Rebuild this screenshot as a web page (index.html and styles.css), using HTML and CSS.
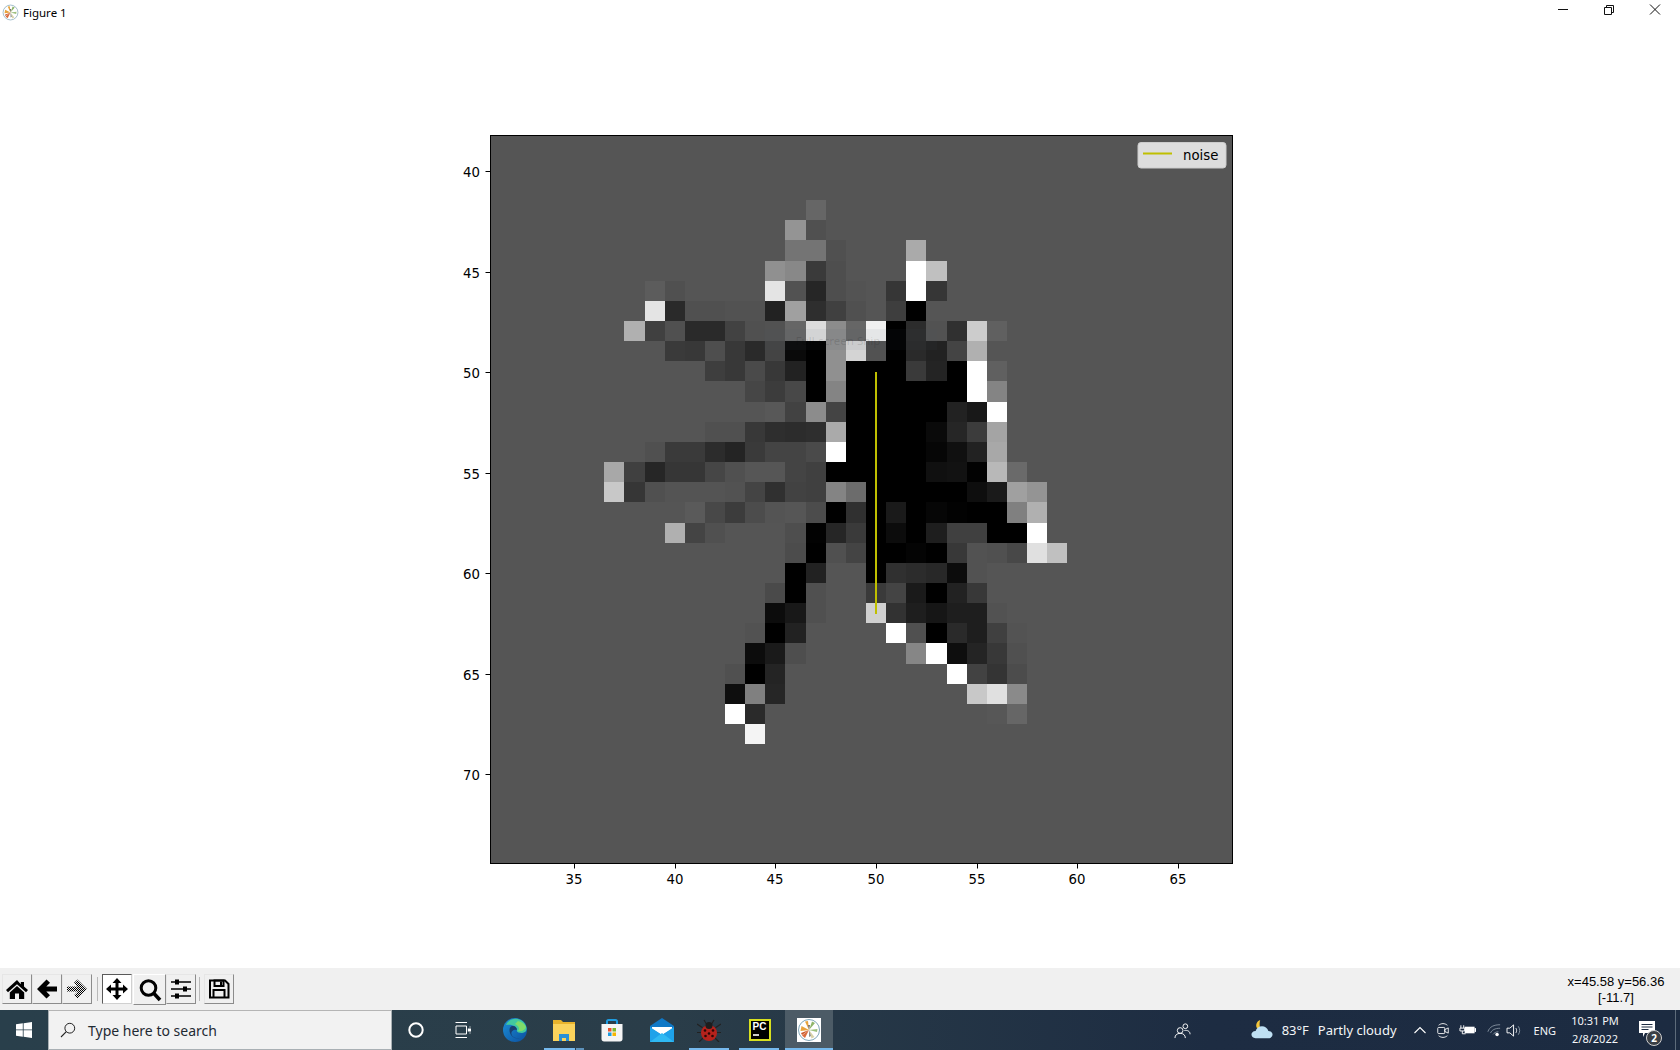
FILE: index.html
```html
<!DOCTYPE html>
<html lang="en">
<head>
<meta charset="utf-8">
<title>Figure 1</title>
<link rel="stylesheet" href="styles.css">
</head>
<body>
<svg width="0" height="0" class="defs">
  <defs>
    <pattern id="dither" width="2" height="2" patternUnits="userSpaceOnUse">
      <rect width="1" height="1" fill="#000"/><rect x="1" y="1" width="1" height="1" fill="#000"/>
    </pattern>
    <g id="mpl-logo">
      <circle cx="12" cy="12" r="10.5" fill="#fff" stroke="#7fa6b8" stroke-width="1"/>
      <path d="M12 12 L4.5 8 L3.5 13Z" fill="#e8a33d"/>
      <path d="M12 12 L8 3.5 L11 3Z" fill="#e8a33d"/>
      <path d="M12 12 L18 5 L15 3.5Z" fill="#8fb56a"/>
      <path d="M12 12 L20.5 11 L20 14Z" fill="#9cbf7c"/>
      <path d="M12 12 L17.5 19 L14.5 20.5Z" fill="#d9d2a8"/>
      <path d="M12 12 L8 20 L5 17.5Z" fill="#d96b3c"/>
      <path d="M12 12 L4 15 L5 17Z" fill="#c9582c"/>
      <path d="M12 12 L13 7 L11 7Z" fill="#6f6f6f"/>
      <path d="M12 12 L12 19 L14 18Z" fill="#8a8f8f"/>
    </g>
  </defs>
</svg>

<header class="titlebar">
  <svg class="title-icon" viewBox="0 0 24 24"><use href="#mpl-logo"/></svg>
  <span class="title-text">Figure 1</span>
  <div class="winctl">
    <svg class="winbtn" viewBox="0 2 46 24"><path d="M18 11.5H28" stroke="#111" fill="none"/></svg>
    <svg class="winbtn" viewBox="0 2 46 24"><path d="M18.5 9.5h7v7h-7zM20.5 9.5v-2h7v7h-2" stroke="#111" fill="none"/></svg>
    <svg class="winbtn" viewBox="0 2 46 24"><path d="M18 6.5L28 16.5M28 6.5L18 16.5" stroke="#111" fill="none"/></svg>
  </div>
</header>

<main class="figure">
  <svg id="plot" class="plot" viewBox="0 24 1680 944" width="1680" height="944">
    <rect class="axes-bg" x="490.5" y="135.5" width="742" height="728"/>
    <g id="cells" shape-rendering="crispEdges"></g>
    <line class="data-line" x1="876" y1="372" x2="876" y2="614"/>
    <rect class="axes-frame" x="490.5" y="135.5" width="742" height="728"/>
    <g id="ticks"></g>
    <rect class="legend-box" x="1138" y="142.5" width="88" height="25.5" rx="3"/>
    <line class="data-line" x1="1143" y1="153.5" x2="1172" y2="153.5"/>
    <text class="tick-label" x="1183" y="159.5">noise</text>
    <rect class="snip-box" x="764" y="329" width="173" height="21"/>
    <text class="snip-text" x="838" y="345" text-anchor="middle">Full-screen Snip</text>
  </svg>
</main>

<section class="toolbar">
  <button class="tb-btn"><svg viewBox="0 0 24 24"><path d="M12 3L1 13l2 2.200L12 7.300l9 7.900 2-2.200-4-3.600V5h-3.200v2.200z"/><path d="M4.800 15.400L12 9l7.200 6.400V22H14v-5.500h-4V22H4.800z"/></svg></button>
  <button class="tb-btn"><svg viewBox="0 0 24 24"><path d="M2 12L11.500 2.500l3.500 3.300-3.700 3.600H22v5.200H11.300l3.700 3.600-3.500 3.300z"/></svg></button>
  <button class="tb-btn"><svg viewBox="0 0 24 24"><path fill="url(#dither)" d="M22 12L12.500 2.500 9 5.800l3.700 3.600H2v5.200h10.700L9 18.200l3.500 3.300z"/></svg></button>
  <span class="tb-sep"></span>
  <button class="tb-btn tb-pressed"><svg viewBox="0 0 24 24"><path d="M12 1l4.500 5h-3v4.500H18v-3l5 4.500-5 4.500v-3h-4.500V18h3L12 23l-4.500-5h3v-4.500H6v3L1 12l5-4.500v3h4.500V6h-3z"/></svg></button>
  <button class="tb-btn tb-hover"><svg viewBox="0 0 24 24"><circle cx="10.500" cy="10" r="7.300" fill="none" stroke="#000" stroke-width="3"/><path d="M15.500 15l6.500 7" stroke="#000" stroke-width="3.600" fill="none"/></svg></button>
  <button class="tb-btn"><svg viewBox="0 0 24 24"><path d="M2 5h20M2 12h20M2 19h20" stroke="#000" stroke-width="1.500" fill="none"/><rect x="6" y="2.500" width="4" height="5"/><rect x="14" y="9.500" width="4" height="5"/><rect x="6" y="16.500" width="4" height="5"/></svg></button>
  <span class="tb-sep tb-sep-b"></span>
  <button class="tb-btn"><svg viewBox="0 0 24 24"><path d="M3 3.500h15l3.500 3.500v13.500H3z" fill="none" stroke="#000" stroke-width="2"/><path d="M7.500 3.500h9v5.500h-9z" fill="none" stroke="#000" stroke-width="2"/><path d="M13 4.500h2v3.500h-2z"/><path d="M6.500 20.500v-7.500h11v7.500" fill="none" stroke="#000" stroke-width="2"/></svg></button>
  <div class="coords">x=45.58 y=56.36<br>[-11.7]</div>
</section>

<footer class="taskbar">
  <div class="start"><svg class="ico16" viewBox="0 0 16 16"><path fill="#fff" d="M0 2.300L6.800 1.300V7.500H0zM7.600 1.200L16 0V7.500H7.600zM0 8.300H6.800V14.700L0 13.700zM7.600 8.300H16V16L7.600 14.800z"/></svg></div>
  <div class="search">
    <svg class="search-ico" viewBox="0 0 16 16"><circle cx="9.800" cy="6.200" r="4.900" fill="none" stroke="#222" stroke-width="1"/><path d="M6.300 9.700L1 15" stroke="#222" stroke-width="1.100" fill="none"/></svg>
    <span class="search-text">Type here to search</span>
  </div>
  <div class="tasks">
    <div class="task task-a"><svg class="ico18" viewBox="0 0 18 18"><circle cx="9" cy="9" r="6.700" fill="none" stroke="#fff" stroke-width="2"/></svg></div>
    <div class="task task-b"><svg class="ico18" viewBox="0 0 18 18"><path d="M1.500 1.500H13M1.500 16.500H13M2 5H12.500V13H2zM16 5.500V6.500M16 11.500V12.500" stroke="#fff" stroke-width="1" fill="none"/><rect x="13.800" y="7.500" width="3.200" height="3" fill="#fff"/></svg></div>
    <div class="task task-c"><svg class="ico24" viewBox="0 0 24 24">
      <defs><linearGradient id="edgeg" x1="0" y1="0" x2="1" y2="1"><stop offset="0" stop-color="#1c8fd8"/><stop offset="1" stop-color="#0c4f9e"/></linearGradient></defs>
      <circle cx="12" cy="12" r="12" fill="url(#edgeg)"/>
      <path d="M3 7C6-1 19-2 23 8c1.500 4 0 7-4 7-3 0-6-1-5-3 0-3-4-6-11-5z" fill="#42c9a0"/>
      <path d="M14 12c0-3-3-5-6-3.500C6 10 6 14 8 17c2 3 6 4 10 3-5 1-9-1-9.500-4-.5-3 2.500-5 5.500-4z" fill="#1a3f70"/>
      <path d="M15 3c4 1 7 3 8 6-1 3-4 5-8 4 2-2 1-5-3-7z" fill="#7fdc6a"/>
    </svg></div>
    <div class="task task-d run run-split"><svg class="ico24" viewBox="0 0 24 24">
      <path d="M1 2h8l2 2h12v19H1z" fill="#e9b32c"/>
      <path d="M1 6h22v17H1z" fill="#fbd35c"/>
      <path d="M7 23v-7h10v7h-3v-3h-4v3z" fill="#2b8fd6"/>
    </svg></div>
    <div class="task task-e"><svg class="ico24" viewBox="0 0 24 24">
      <path d="M7 7V3.500c0-1 .5-1.500 1.500-1.500h7c1 0 1.500.5 1.500 1.500V7" fill="none" stroke="#1f9ce0" stroke-width="2"/>
      <path d="M1.500 6h21v15c0 1.500-1 2.500-2.500 2.500H4c-1.500 0-2.500-1-2.500-2.500z" fill="#f5f5f5"/>
      <rect x="8" y="10" width="3.500" height="3.500" fill="#e9502c"/><rect x="12.500" y="10" width="3.500" height="3.500" fill="#7cb82c"/>
      <rect x="8" y="14.500" width="3.500" height="3.500" fill="#1f9ce0"/><rect x="12.500" y="14.500" width="3.500" height="3.500" fill="#f7b600"/>
    </svg></div>
    <div class="task task-f"><svg class="ico24" viewBox="0 0 24 24">
      <path d="M0 8L12 0l12 8v16H0z" fill="#0f78c6"/>
      <path d="M2 9h20v2L12 17 2 11z" fill="#fff"/>
      <path d="M0 9l12 8 12-8v15H0z" fill="#1ea2ea"/>
      <path d="M0 24l12-9 12 9z" fill="#2fb9f3"/>
    </svg></div>
    <div class="task task-g run"><svg class="ico24" viewBox="0 0 24 24">
      <path d="M7 2l3 5M17 2l-3 5M6 10L0 6M18 10l6-4M4 14.500H-1M20 14.500h5M6 20l-4 4M18 20l4 4" stroke="#222" stroke-width="1.200" fill="none"/>
      <ellipse cx="12" cy="15" rx="8" ry="8" fill="#b5221c"/>
      <circle cx="12" cy="7.500" r="3.500" fill="#1d1d1d"/>
      <circle cx="8" cy="12.500" r="1.300" fill="#2a0805"/><circle cx="16" cy="12.500" r="1.300" fill="#2a0805"/><circle cx="8.500" cy="18" r="1.300" fill="#2a0805"/><circle cx="15.500" cy="18" r="1.300" fill="#2a0805"/><circle cx="12" cy="15.500" r="1.300" fill="#2a0805"/>
    </svg></div>
    <div class="task task-h run"><div class="pc-icon"><span class="pc-text">PC</span><span class="pc-dash"></span></div></div>
    <div class="task task-i run active"><div class="fig-icon"><svg class="ico24" viewBox="0 0 24 24"><use href="#mpl-logo"/></svg></div></div>
  </div>
  <div class="tray">
    <svg class="tray-people" viewBox="0 0 18 18"><circle cx="6.500" cy="9" r="3" fill="none" stroke="#fff"/><path d="M1 17c0-3 2-5 5.500-5s5.500 2 5.500 5" fill="none" stroke="#fff"/><circle cx="12" cy="4.500" r="2.500" fill="none" stroke="#fff"/><path d="M11 9c3-.5 6 .5 6 4" fill="none" stroke="#fff"/></svg>
    <svg class="tray-weather" viewBox="0 0 24 24"><path d="M10 1c-3 1-5 4-4 8 1 2 3 3 6 3-3-2-3-7-2-11z" fill="#f3c53a"/><path d="M5 21c-3 0-4.500-2-4.500-4S2 13 5 13c1-3 4-5 7-5s6 2 7 5c3 0 4.500 2 4.500 4s-1.500 4-4.500 4z" fill="#bfe0f3"/></svg>
    <span class="tray-temp">83°F</span>
    <span class="tray-cond">Partly cloudy</span>
    <svg class="tray-chev" viewBox="0 0 14 14"><path d="M1.500 10L7 4.500 12.500 10" stroke="#fff" fill="none" stroke-width="1.100"/></svg>
    <svg class="tray-meet" viewBox="0 0 16 18"><path d="M3 3C6 .5 10 .5 13 3M3 15c3 2.500 7 2.500 10 0" stroke="#fff" fill="none"/><rect x="2" y="5.500" width="8" height="7" rx="1" fill="none" stroke="#fff"/><path d="M10 8l4-2v6l-4-2z" fill="none" stroke="#fff"/></svg>
    <svg class="tray-batt" viewBox="0 0 18 12"><path d="M2 1v3M5 1v3M1 4h5v3H1zM3.500 7v3H7" stroke="#fff" fill="none"/><rect x="6" y="2.500" width="10.500" height="7" fill="#fff"/><rect x="16.500" y="4" width="1.500" height="4" fill="#fff"/></svg>
    <svg class="tray-wifi" viewBox="0 0 16 16"><path d="M1 10C3 4 8 2 15 2" stroke="#8a97a5" fill="none"/><path d="M4 11.500C5.500 8 9 6 15 6" stroke="#8a97a5" fill="none"/><path d="M7 13C8 11.500 10 10 13 10" stroke="#8a97a5" fill="none"/><circle cx="11.500" cy="13" r="2" fill="#fff"/></svg>
    <svg class="tray-vol" viewBox="0 0 18 16"><path d="M1 5.500h3L8 2v12L4 10.500H1z" fill="none" stroke="#fff"/><path d="M10.500 5.500c1 1.500 1 3.500 0 5" stroke="#fff" fill="none"/><path d="M13 3.500c2 2.500 2 6.500 0 9" stroke="#8a97a5" fill="none"/></svg>
    <span class="tray-lang">ENG</span>
    <div class="tray-clock"><span>10:31 PM</span><span>2/8/2022</span></div>
    <div class="tray-note">
      <svg class="note-ico" viewBox="0 0 16 16"><path d="M0 0h16v12H6l-2 4v-4H0z" fill="#fff"/><path d="M2.500 3.500h11M2.500 6h11M2.500 8.500h7" stroke="#1d2c42" fill="none"/></svg>
      <span class="note-badge">2</span>
    </div>
    <span class="show-desktop"></span>
  </div>
</footer>
<script src="app.js"></script>
</body>
</html>
```
FILE: styles.css
```css
* { box-sizing: border-box; }
html, body { margin: 0; padding: 0; }
body {
  width: 1680px;
  height: 1050px;
  overflow: hidden;
  display: flex;
  flex-direction: column;
  background: #fff;
  font-family: "Noto Sans", "Open Sans", sans-serif;
}
.defs { position: absolute; }

/* title bar */
.titlebar { height: 24px; display: flex; align-items: center; flex: none; background: #fff; }
.title-icon { width: 17px; height: 17px; margin-left: 2px; }
.title-text { margin-left: 4px; font-size: 11.5px; color: #000; }
.winctl { margin-left: auto; margin-right: 2px; display: flex; }
.winbtn { width: 46px; height: 24px; display: block; }

/* figure */
.figure { height: 944px; flex: none; }
.plot { display: block; }
.axes-bg { fill: #555; }
.axes-frame { fill: none; stroke: #000; stroke-width: 1; }
.data-line { stroke: #bfbf00; stroke-width: 2; fill: none; }
.tick-mark { stroke: #000; stroke-width: 1; }
.tick-label { font-family: "DejaVu Sans", sans-serif; font-size: 13.3px; fill: #000; }
.legend-box { fill: #dddddd; stroke: #cccccc; stroke-width: 1; }
.snip-box { fill: rgba(60, 90, 100, 0.06); }
.snip-text { font-family: "Noto Sans", sans-serif; font-size: 11.5px; fill: rgba(0, 0, 0, 0.12); }

/* matplotlib toolbar */
.toolbar {
  height: 42px;
  flex: none;
  background: #f0f0f0;
  display: flex;
  align-items: flex-start;
  padding: 6px 0 0 2px;
}
.tb-btn {
  width: 30px;
  height: 30px;
  padding: 0;
  background: #f0f0f0;
  border: 1px solid;
  border-color: #e6e6e6 #8c8c8c #8c8c8c #e6e6e6;
  display: flex;
  align-items: center;
  justify-content: center;
}
.tb-btn svg { width: 24px; height: 24px; display: block; }
.tb-pressed { background: #fff; border-color: #5a5a5a #d0d0d0 #d0d0d0 #5a5a5a; }
.tb-hover { width: 33px; height: 31px; margin-left: 1px; border-color: #fff #8c8c8c #8c8c8c #fff; }
.tb-sep { width: 1px; height: 24px; margin: 3px 4px 0 5px; background: #b9b9b9; }
.tb-sep-b { margin: 3px 4px 0 3px; }
.coords {
  margin-left: auto;
  width: 128px;
  text-align: center;
  font-family: "Liberation Sans", Arial, sans-serif;
  font-size: 13px;
  line-height: 16px;
  color: #000;
}

/* taskbar */
.taskbar {
  height: 40px;
  flex: none;
  display: flex;
  align-items: stretch;
  background: linear-gradient(90deg, #293f4b 0%, #2a3d49 40%, #1d2c42 72%, #1c2b41 100%);
  color: #fff;
}
.start { width: 48px; flex: none; display: flex; align-items: center; justify-content: center; }
.ico16 { width: 16px; height: 16px; display: block; }
.ico18 { width: 18px; height: 18px; display: block; }
.ico24 { width: 24px; height: 24px; display: block; }
.search {
  width: 344px;
  flex: none;
  background: #f2f2f2;
  border: 1px solid #a9b0b4;
  border-top-color: #b5b5b5;
  display: flex;
  align-items: center;
  padding-left: 11px;
}
.search-ico { width: 16px; height: 16px; }
.search-text { margin-left: 12px; font-size: 14px; color: #1f2a33; }
.tasks { display: flex; align-items: stretch; }
.task { width: 48px; flex: none; display: flex; align-items: center; justify-content: center; position: relative; }
.task-b { margin-left: -1px; }
.task-c { margin-left: 4px; }
.task-d { margin-left: 1px; }
.task-f { margin-left: 2px; }
.task-g { margin-left: -1px; }
.task-h { margin-left: 2px; }
.task-i { margin-left: 2px; }
.run::after {
  content: "";
  position: absolute;
  left: 4px;
  right: 4px;
  bottom: 0;
  height: 2px;
  background: #76b9ed;
}
.run-split::after { left: 4px; right: 13px; }
.run-split::before {
  content: "";
  position: absolute;
  right: 4px;
  width: 8px;
  bottom: 0;
  height: 2px;
  background: #5d92bb;
}
.active { background: #4c5b66; }
.active::after { left: 0; right: 0; }
.pc-icon {
  width: 22px;
  height: 22px;
  margin-left: 1px;
  background: #000;
  border: 2px solid #d8e020;
  display: flex;
  flex-direction: column;
  padding: 1px 2px;
}
.pc-text { font-family: "Liberation Sans", sans-serif; font-weight: 700; font-size: 10px; line-height: 10px; color: #fff; }
.pc-dash { width: 6px; height: 2px; background: #ccc; margin-top: 2px; }
.fig-icon { width: 24px; height: 24px; background: #fff; }

.tray { margin-left: auto; display: flex; align-items: center; height: 40px; }
.tray-people { width: 17px; height: 17px; margin-right: 59px; }
.tray-weather { width: 24px; height: 22px; margin-right: 8px; }
.tray-temp { font-size: 13px; margin-right: 9px; color: #f4f6f8; }
.tray-cond { font-size: 13px; margin-right: 16px; color: #f4f6f8; }
.tray-chev { width: 14px; height: 14px; margin-right: 9px; }
.tray-meet { width: 14px; height: 17px; margin-right: 9px; }
.tray-batt { width: 17px; height: 12px; margin-right: 11px; }
.tray-wifi { width: 14px; height: 14px; margin-right: 5px; }
.tray-vol { width: 17px; height: 15px; margin-right: 11px; }
.tray-lang { font-size: 11px; margin-right: 15px; color: #f4f6f8; }
.tray-clock {
  display: flex;
  flex-direction: column;
  align-items: center;
  font-size: 11px;
  line-height: 18px;
  width: 48px;
  white-space: nowrap;
  color: #f4f6f8;
  margin-right: 20px;
}
.tray-note { width: 36px; height: 40px; position: relative; display: flex; align-items: center; }
.note-ico { width: 16px; height: 16px; margin-top: -3px; }
.note-badge {
  position: absolute;
  left: 7px;
  top: 20px;
  width: 16px;
  height: 16px;
  border-radius: 50%;
  background: #3a3f45;
  border: 1px solid #d0d0d0;
  color: #fff;
  font-size: 10px;
  font-weight: 700;
  line-height: 14px;
  text-align: center;
}
.show-desktop { width: 5px; height: 40px; border-left: 1px solid #5d6b7a; }
```
FILE: app.js
```js
// Image data: row -> list of [first column, hex grey values].
var ROWS = {
  42: [[47, "66"]],
  43: [[46, "94 50"]],
  44: [[46, "74 74 50"], [52, "aa"]],
  45: [[45, "90 88 3a 4e"], [52, "ff c0"]],
  46: [[39, "5c 50"], [45, "e4 52 26 4e 53"], [51, "36 ff 36"]],
  47: [[39, "e4 2a 50 50 52 52 22 a0 2e 40 50 55 3e 00"]],
  48: [[38, "b0 40 50 2a 2a 42 50 52 66 dc 8c 66 f0 00 2c 52 30 cc 60"]],
  49: [[40, "3a 38 4e 38 2a 44 0a 00 90 d4 52 00 2a 22 44 b0 55"]],
  50: [[42, "3e 38 4a 38 22 00 90 00 00 00 3a 24 00 ff 60"]],
  51: [[44, "46 3c 48 00 84 00 00 00 00 00 00 ff 84"]],
  52: [[45, "58 42 8c 44 00 00 00 00 00 22 18 ff"]],
  53: [[42, "50 50 38 2e 2c 2e aa 00 00 00 00 0a 26 3c a4"]],
  54: [[39, "50 3a 3a 2c 24 3a 44 44 4a ff 00 00 00 00 06 10 22 a8"]],
  55: [[37, "a8 40 26 36 36 46 50 56 56 44 40 00 00 00 00 00 10 12 02 b8 6a"]],
  56: [[37, "c8 36 50 54 54 54 52 44 30 42 40 84 6c 00 00 00 00 00 0e 1a a0 94"]],
  57: [[41, "5a 48 3c 4c 54 56 4c 00 30 00 1a 00 06 02 00 00 80 b0"]],
  58: [[40, "b0 44 50 55 55 55 4e 02 26 3a 00 0c 00 1e 40 40 00 00 ff"]],
  59: [[46, "4c 00 50 44 00 00 04 00 38 52 50 48 e0 c0"]],
  60: [[46, "00 22 55 55 00 30 2c 28 0c 52"]],
  61: [[45, "4a 00 50 55 55 3a 44 1a 00 22 38"]],
  62: [[45, "0c 18 50 55 55 d0 32 1e 16 1e 1e 52"]],
  63: [[44, "52 00 22 55 55 55 55 ff 50 00 2a 1e 40 53"]],
  64: [[44, "0c 1a 4e"], [52, "86 ff 0e 24 38 50"]],
  65: [[43, "50 00 24"], [54, "ff 42 34 4c"]],
  66: [[43, "0e 80 26"], [55, "c8 e0 8a"]],
  67: [[43, "ff 2a"], [56, "57 66"]],
  68: [[44, "f4"]]
};

var NS = "http://www.w3.org/2000/svg";
var cellLayer = document.getElementById("cells");
var tickLayer = document.getElementById("ticks");

function el(name, attrs, parent, text) {
  var node = document.createElementNS(NS, name);
  for (var k in attrs) node.setAttribute(k, attrs[k]);
  if (text) node.textContent = text;
  parent.appendChild(node);
  return node;
}
function colX(c) { return Math.round(866 + (c - 50) * 20.13); }
function rowY(r) { return Math.round(321 + (r - 48) * 20.15); }

Object.keys(ROWS).forEach(function (key) {
  var r = +key;
  ROWS[key].forEach(function (run) {
    run[1].split(" ").forEach(function (hex, i) {
      var c = run[0] + i;
      el("rect", {
        x: colX(c), y: rowY(r),
        width: colX(c + 1) - colX(c), height: rowY(r + 1) - rowY(r),
        fill: "#" + hex + hex + hex
      }, cellLayer);
    });
  });
});

for (var xv = 35; xv <= 65; xv += 5) {
  var x = Math.round(876 + (xv - 50) * 20.13) + 0.5;
  el("line", { "class": "tick-mark", x1: x, x2: x, y1: 863.5, y2: 868.5 }, tickLayer);
  el("text", { "class": "tick-label", x: x - 0.5, y: 884, "text-anchor": "middle" }, tickLayer, String(xv));
}
for (var yv = 40; yv <= 70; yv += 5) {
  var y = Math.round(171 + (yv - 40) * 20.1) + 0.5;
  el("line", { "class": "tick-mark", x1: 485.5, x2: 490.5, y1: y, y2: y }, tickLayer);
  el("text", { "class": "tick-label", x: 480, y: y + 5, "text-anchor": "end" }, tickLayer, String(yv));
}
```
